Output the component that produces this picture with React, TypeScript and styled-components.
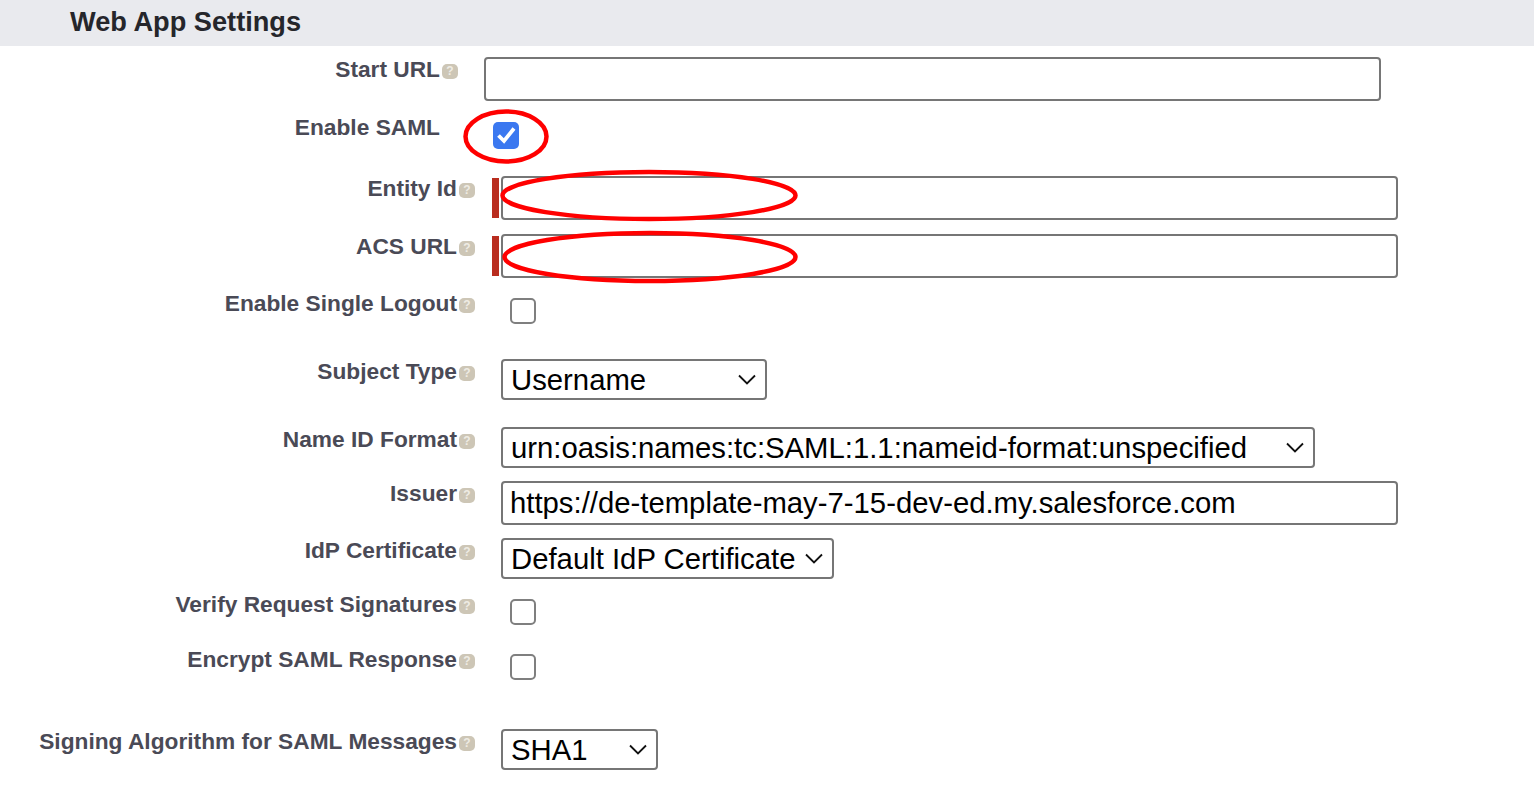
import React from "react";
import styled, { createGlobalStyle } from "styled-components";

const Global = createGlobalStyle`
  html, body { margin: 0; padding: 0; background: #fff; }
  body { font-family: "Liberation Sans", Arial, sans-serif; overflow: hidden; }
`;

const Page = styled.div`
  position: relative;
  width: 1534px;
  height: 790px;
  overflow: hidden;
`;

const Header = styled.h2`
  margin: 0;
  height: 46px;
  box-sizing: border-box;
  padding: 6px 0 0 70px;
  background: #e9eaee;
  color: #25262b;
  font-size: 27.2px;
  line-height: 32px;
  font-weight: 700;
`;

const Form = styled.div`
  display: flex;
  flex-direction: column;
  padding-top: 11px;
`;

const Row = styled.div<{ $height: number }>`
  display: flex;
  align-items: flex-start;
  height: ${(p) => p.$height}px;
`;

const Label = styled.label<{ $narrow?: boolean }>`
  width: ${(p) => (p.$narrow ? 440 : 457)}px;
  flex: none;
  text-align: right;
  color: #4a4a56;
  font-size: 22.72px;
  line-height: 25px;
  font-weight: 700;
  white-space: nowrap;
`;

const HelpSlot = styled.span`
  flex: none;
  width: 18px;
  height: 26px;
  display: flex;
  align-items: center;
  padding-left: 2px;
  box-sizing: border-box;
`;

const Help = styled.span`
  width: 16px;
  height: 15px;
  margin-top: 3px;
  border-radius: 5px;
  background: #cdc6b6;
  color: #efece4;
  font-size: 12px;
  line-height: 15px;
  font-weight: 700;
  text-align: center;
`;

const Value = styled.div<{ $indent: number; $top?: number }>`
  display: flex;
  align-items: stretch;
  padding-left: ${(p) => p.$indent}px;
  padding-top: ${(p) => p.$top ?? 0}px;
`;

const RequiredBar = styled.span`
  width: 7px;
  margin: 2px 2px 2px 0;
  background: #b92d1f;
`;

const TextInput = styled.input`
  width: 897px;
  height: 44px;
  box-sizing: border-box;
  border: 2px solid #767676;
  border-radius: 4px;
  padding: 0 7px;
  background: #fff;
  color: #000;
  font-family: "Liberation Sans", Arial, sans-serif;
  font-size: 29.3px;
  outline: none;
`;

const SelectWrap = styled.span<{ $width: number }>`
  position: relative;
  display: block;
  width: ${(p) => p.$width}px;
  height: 41px;
`;

const SelectBox = styled.select`
  appearance: none;
  width: 100%;
  height: 100%;
  box-sizing: border-box;
  border: 2px solid #767676;
  border-radius: 4px;
  padding: 0 0 0 8px;
  background: #fff;
  color: #000;
  font-family: "Liberation Sans", Arial, sans-serif;
  font-size: 29.3px;
  outline: none;
`;

const Chevron = styled.svg`
  position: absolute;
  right: 11px;
  top: 15px;
  width: 18px;
  height: 11px;
  pointer-events: none;
`;

const Check = styled.span<{ $on?: boolean }>`
  display: block;
  width: 26px;
  height: ${(p) => (p.$on ? 27 : 26)}px;
  box-sizing: border-box;
  border-radius: 5px;
  border: ${(p) => (p.$on ? "none" : "2px solid #7f7f7f")};
  background: ${(p) => (p.$on ? "#3b78f0" : "#fff")};
`;

const CheckIcon = styled.svg`
  display: block;
  width: 26px;
  height: 27px;
`;

const Annotations = styled.svg`
  position: absolute;
  left: 0;
  top: 0;
  width: 1534px;
  height: 790px;
  pointer-events: none;
`;

const HelpIcon = () => (
  <HelpSlot>
    <Help>?</Help>
  </HelpSlot>
);

const Select = ({ width, value }: { width: number; value: string }) => (
  <SelectWrap $width={width}>
    <SelectBox defaultValue={value}>
      <option>{value}</option>
    </SelectBox>
    <Chevron viewBox="0 0 18 11" fill="none">
      <path d="M1 1.5L9 9.5L17 1.5" stroke="#111" strokeWidth="1.8" />
    </Chevron>
  </SelectWrap>
);

const Checkbox = ({ on }: { on?: boolean }) => (
  <Check $on={on}>
    {on && (
      <CheckIcon viewBox="0 0 26 27" fill="none">
        <path d="M5.5 13.5L11 19L21 6.5" stroke="#fff" strokeWidth="3.8" />
      </CheckIcon>
    )}
  </Check>
);

export default function App() {
  return (
    <Page>
      <Global />
      <Header>Web App Settings</Header>
      <Form>
        <Row $height={58}>
          <Label $narrow>Start URL</Label>
          <HelpIcon />
          <Value $indent={26}>
            <TextInput readOnly />
          </Value>
        </Row>
        <Row $height={61}>
          <Label $narrow>Enable SAML</Label>
          <HelpSlot />
          <Value $indent={35} $top={7}>
            <Checkbox on />
          </Value>
        </Row>
        <Row $height={58}>
          <Label>Entity Id</Label>
          <HelpIcon />
          <Value $indent={17}>
            <RequiredBar />
            <TextInput readOnly />
          </Value>
        </Row>
        <Row $height={57}>
          <Label>ACS URL</Label>
          <HelpIcon />
          <Value $indent={17}>
            <RequiredBar />
            <TextInput readOnly />
          </Value>
        </Row>
        <Row $height={68}>
          <Label>Enable Single Logout</Label>
          <HelpIcon />
          <Value $indent={35} $top={7}>
            <Checkbox />
          </Value>
        </Row>
        <Row $height={68}>
          <Label>Subject Type</Label>
          <HelpIcon />
          <Value $indent={26}>
            <Select width={266} value="Username" />
          </Value>
        </Row>
        <Row $height={54}>
          <Label>Name ID Format</Label>
          <HelpIcon />
          <Value $indent={26}>
            <Select width={814} value="urn:oasis:names:tc:SAML:1.1:nameid-format:unspecified" />
          </Value>
        </Row>
        <Row $height={57}>
          <Label>Issuer</Label>
          <HelpIcon />
          <Value $indent={26}>
            <TextInput readOnly value="https://de-template-may-7-15-dev-ed.my.salesforce.com" />
          </Value>
        </Row>
        <Row $height={54}>
          <Label>IdP Certificate</Label>
          <HelpIcon />
          <Value $indent={26}>
            <Select width={333} value="Default IdP Certificate" />
          </Value>
        </Row>
        <Row $height={55}>
          <Label>Verify Request Signatures</Label>
          <HelpIcon />
          <Value $indent={35} $top={7}>
            <Checkbox />
          </Value>
        </Row>
        <Row $height={82}>
          <Label>Encrypt SAML Response</Label>
          <HelpIcon />
          <Value $indent={35} $top={7}>
            <Checkbox />
          </Value>
        </Row>
        <Row $height={50}>
          <Label>Signing Algorithm for SAML Messages</Label>
          <HelpIcon />
          <Value $indent={26}>
            <Select width={157} value="SHA1" />
          </Value>
        </Row>
      </Form>
      <Annotations viewBox="0 0 1534 790" fill="none" stroke="#f00" strokeWidth="4.5">
        <ellipse cx="506" cy="136.5" rx="40.5" ry="25" />
        <ellipse cx="649" cy="195.5" rx="146.5" ry="23.5" />
        <ellipse cx="650" cy="257" rx="145.5" ry="24" />
      </Annotations>
    </Page>
  );
}
